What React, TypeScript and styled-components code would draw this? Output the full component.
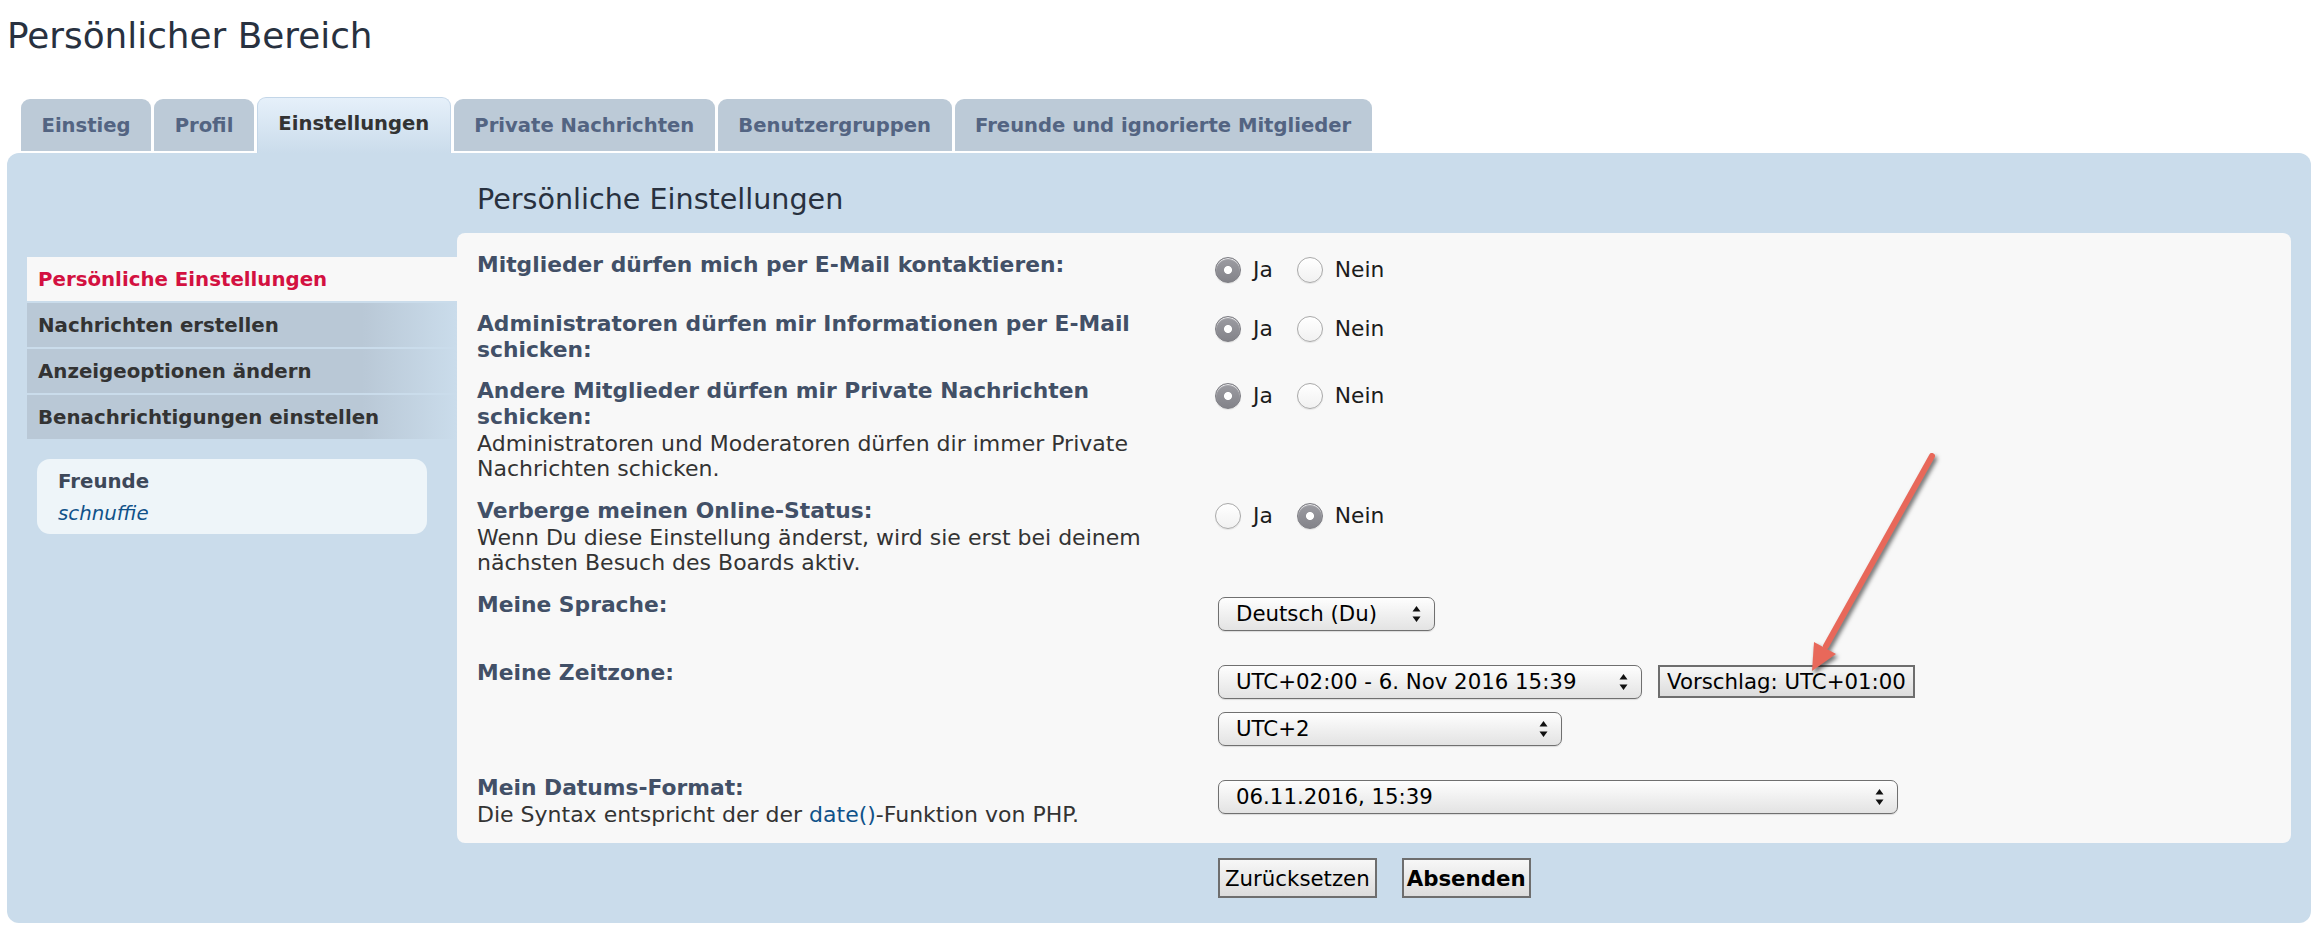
import React from "react";
import styled, { createGlobalStyle, css } from "styled-components";

const GlobalStyle = createGlobalStyle`
  html, body {
    margin: 0;
    padding: 0;
    background: #ffffff;
  }
  body {
    font-family: "DejaVu Sans", Verdana, sans-serif;
    color: #333333;
  }
  *, *::before, *::after {
    box-sizing: border-box;
  }
`;

const Page = styled.div`
  position: relative;
  width: 2324px;
  padding: 0 13px 0 7px;
`;

const PageTitle = styled.h2`
  margin: 15px 0 0;
  font-size: 35.8px;
  font-weight: normal;
  line-height: 41px;
  color: #28313f;
`;

/* ---------- tabs ---------- */

const TabBar = styled.ul`
  display: flex;
  align-items: flex-end;
  gap: 3px;
  list-style: none;
  margin: 41px 0 0 14px;
  padding: 0;
`;

const Tab = styled.li<{ $active?: boolean }>`
  display: flex;
  align-items: center;
  padding: 0 20.5px;
  border-radius: 9px 9px 0 0;
  font-size: 19.6px;
  font-weight: bold;
  white-space: nowrap;
  ${({ $active }) =>
    $active
      ? css`
          height: 56px;
          padding-bottom: 4px;
          color: #333333;
          background: linear-gradient(#e6f0fa, #cadceb);
          border: 1px solid #c3d6e8;
          border-bottom: none;
        `
      : css`
          height: 52px;
          margin-bottom: 2px;
          color: #536482;
          background: #bccad7;
        `}
`;

/* ---------- panel ---------- */

const Panel = styled.div`
  display: flex;
  background: #cadceb;
  border-radius: 12px;
  padding: 29px 20px 25px 20px;
`;

const Sidebar = styled.div`
  width: 430px;
  flex-shrink: 0;
  margin-top: 75px;
`;

const MenuList = styled.ul`
  display: flex;
  flex-direction: column;
  gap: 2px;
  list-style: none;
  margin: 0;
  padding: 0;
`;

const MenuItem = styled.li<{ $active?: boolean }>`
  display: flex;
  align-items: center;
  height: 44px;
  padding-left: 11px;
  font-size: 19.8px;
  font-weight: bold;
  white-space: nowrap;
  ${({ $active }) =>
    $active
      ? css`
          color: #d31141;
          background: #f8f8f8;
        `
      : css`
          color: #333333;
          background: linear-gradient(to right, #b9c8d6 78%, #cadceb 100%);
        `}
`;

const FriendsBox = styled.div`
  width: 390px;
  margin: 20px 0 0 10px;
  padding: 7px 21px 4px;
  border-radius: 13px;
  background: #eef5f9;
  font-size: 19.8px;
  line-height: 32px;
`;

const FriendsTitle = styled.div`
  font-weight: bold;
  color: #3d4859;
`;

const FriendLink = styled.a`
  display: block;
  font-style: italic;
  color: #105289;
  text-decoration: none;
`;

const Main = styled.div`
  flex: 1;
  display: flex;
  flex-direction: column;
`;

const SectionTitle = styled.h3`
  margin: 0 0 0 20px;
  font-size: 28.6px;
  font-weight: normal;
  line-height: 34px;
  color: #28313f;
`;

const ContentBox = styled.div`
  margin-top: 17px;
  padding: 19px 20px 0 20px;
  background: #f8f8f8;
  border-radius: 8px;
`;

/* ---------- form rows ---------- */

const Row = styled.div`
  display: grid;
  grid-template-columns: 738px 1fr;
  padding-bottom: 16px;
`;

const Term = styled.div`
  max-width: 700px;
  font-size: 21.8px;
  line-height: 25.5px;
`;

const Label = styled.label`
  display: block;
  font-weight: bold;
  color: #425067;
`;

const Explain = styled.span`
  display: block;
  margin-top: 1.5px;
  font-size: 22px;
  color: #333333;
`;

const InlineLink = styled.a`
  color: #105289;
  text-decoration: none;
`;

const Field = styled.div`
  display: flex;
  flex-direction: column;
  align-items: flex-start;
`;

const RadioGroup = styled.div`
  display: flex;
  align-items: center;
  height: 26px;
  margin: 5px 0 12px;
`;

const RadioOption = styled.label`
  display: inline-flex;
  align-items: center;
  gap: 12px;
  margin-right: 24px;
  font-size: 21.8px;
  line-height: 25.5px;
  color: #1c1c1c;
`;

const Radio = styled.input.attrs({ type: "radio", readOnly: true })`
  appearance: none;
  -webkit-appearance: none;
  width: 26px;
  height: 26px;
  margin: 0;
  border-radius: 50%;
  border: 1px solid #a9a9a9;
  background: linear-gradient(#ffffff, #f1f1f1);
  box-shadow: inset 0 1px 1px rgba(255, 255, 255, 0.9), 0 1px 1px rgba(0, 0, 0, 0.08);

  &:checked {
    border-color: #7c7c82;
    background: radial-gradient(circle, #ffffff 0 3.6px, rgba(255, 255, 255, 0) 4.4px),
      linear-gradient(#9c9ca2, #838389);
  }
`;

const SelectLine = styled.div`
  display: flex;
  align-items: center;
  gap: 16px;
  margin: 5px 0 13px;

  & + & {
    margin-top: 0;
  }
`;

const SelectBox = styled.div<{ $width: number }>`
  display: flex;
  align-items: center;
  justify-content: space-between;
  width: ${({ $width }) => $width}px;
  height: 34px;
  margin-left: 3px;
  padding: 0 13px 0 17px;
  border: 1px solid #707070;
  border-radius: 7px;
  background: linear-gradient(#fefefe, #efefef 55%, #e3e3e3);
  box-shadow: 0 1px 1px rgba(0, 0, 0, 0.12);
  font-size: 21.3px;
  color: #000000;
  white-space: nowrap;
`;

const PushButton = styled.button<{ $primary?: boolean }>`
  height: 40px;
  padding: ${({ $primary }) => ($primary ? "0 3px" : "0 5px")};
  border: 2px solid #6e6e6e;
  border-radius: 0;
  background: linear-gradient(#f7f7f7, #dcdcdc);
  font-family: "DejaVu Sans", Verdana, sans-serif;
  font-size: 21.3px;
  font-weight: ${({ $primary }) => ($primary ? "bold" : "normal")};
  color: #000000;
  white-space: nowrap;
`;

const SuggestButton = styled(PushButton)`
  height: 33px;
  padding: 0 7px;
`;

const ButtonRow = styled.div`
  display: flex;
  gap: 25px;
  margin-top: 15px;
  padding-left: 761px;
`;

const Annotation = styled.svg`
  position: absolute;
  left: 1790px;
  top: 425px;
  overflow: visible;
  filter: drop-shadow(2px 3px 2px rgba(0, 0, 0, 0.55));
  pointer-events: none;
`;

const UpDown = () => (
  <svg width="9" height="18" viewBox="0 0 9 18">
    <path d="M4.5 1 L8.5 6.5 H0.5 Z M4.5 17 L8.5 11.5 H0.5 Z" fill="#111111" />
  </svg>
);

const Select = ({ value, width }: { value: string; width: number }) => (
  <SelectBox $width={width}>
    <span>{value}</span>
    <UpDown />
  </SelectBox>
);

const YesNo = ({ name, yes }: { name: string; yes: boolean }) => (
  <RadioGroup>
    <RadioOption>
      <Radio name={name} checked={yes} />
      Ja
    </RadioOption>
    <RadioOption>
      <Radio name={name} checked={!yes} />
      Nein
    </RadioOption>
  </RadioGroup>
);

const tabs = [
  "Einstieg",
  "Profil",
  "Einstellungen",
  "Private Nachrichten",
  "Benutzergruppen",
  "Freunde und ignorierte Mitglieder",
];

const menu = [
  "Persönliche Einstellungen",
  "Nachrichten erstellen",
  "Anzeigeoptionen ändern",
  "Benachrichtigungen einstellen",
];

export default function App() {
  return (
    <Page>
      <GlobalStyle />
      <PageTitle>Persönlicher Bereich</PageTitle>

      <TabBar>
        {tabs.map((t) => (
          <Tab key={t} $active={t === "Einstellungen"}>
            {t}
          </Tab>
        ))}
      </TabBar>

      <Panel>
        <Sidebar>
          <MenuList>
            {menu.map((m, i) => (
              <MenuItem key={m} $active={i === 0}>
                {m}
              </MenuItem>
            ))}
          </MenuList>
          <FriendsBox>
            <FriendsTitle>Freunde</FriendsTitle>
            <FriendLink href="#">schnuffie</FriendLink>
          </FriendsBox>
        </Sidebar>

        <Main>
          <SectionTitle>Persönliche Einstellungen</SectionTitle>
          <ContentBox>
            <Row>
              <Term>
                <Label>Mitglieder dürfen mich per E-Mail kontaktieren:</Label>
              </Term>
              <Field>
                <YesNo name="viewemail" yes />
              </Field>
            </Row>

            <Row>
              <Term>
                <Label>Administratoren dürfen mir Informationen per E-Mail schicken:</Label>
              </Term>
              <Field>
                <YesNo name="massemail" yes />
              </Field>
            </Row>

            <Row>
              <Term>
                <Label>Andere Mitglieder dürfen mir Private Nachrichten schicken:</Label>
                <Explain>
                  Administratoren und Moderatoren dürfen dir immer Private Nachrichten schicken.
                </Explain>
              </Term>
              <Field>
                <YesNo name="allowpm" yes />
              </Field>
            </Row>

            <Row>
              <Term>
                <Label>Verberge meinen Online-Status:</Label>
                <Explain>
                  Wenn Du diese Einstellung änderst, wird sie erst bei deinem nächsten Besuch des
                  Boards aktiv.
                </Explain>
              </Term>
              <Field>
                <YesNo name="hideonline" yes={false} />
              </Field>
            </Row>

            <Row>
              <Term>
                <Label>Meine Sprache:</Label>
              </Term>
              <Field>
                <SelectLine>
                  <Select value="Deutsch (Du)" width={217} />
                </SelectLine>
              </Field>
            </Row>

            <Row>
              <Term>
                <Label>Meine Zeitzone:</Label>
              </Term>
              <Field>
                <SelectLine>
                  <Select value="UTC+02:00 - 6. Nov 2016 15:39" width={424} />
                  <SuggestButton type="button">Vorschlag: UTC+01:00</SuggestButton>
                </SelectLine>
                <SelectLine>
                  <Select value="UTC+2" width={344} />
                </SelectLine>
              </Field>
            </Row>

            <Row>
              <Term>
                <Label>Mein Datums-Format:</Label>
                <Explain>
                  Die Syntax entspricht der der <InlineLink href="#">date()</InlineLink>-Funktion
                  von PHP.
                </Explain>
              </Term>
              <Field>
                <SelectLine>
                  <Select value="06.11.2016, 15:39" width={680} />
                </SelectLine>
              </Field>
            </Row>
          </ContentBox>

          <ButtonRow>
            <PushButton type="reset">Zurücksetzen</PushButton>
            <PushButton type="submit" $primary>
              Absenden
            </PushButton>
          </ButtonRow>
        </Main>
      </Panel>

      <Annotation width="170" height="250" viewBox="0 0 170 250">
        <line
          x1="142"
          y1="16"
          x2="36"
          y2="206"
          stroke="#e8685a"
          strokeWidth="6"
          strokeLinecap="round"
        />
        <path d="M22 231 L46 214 L24 202 Z" fill="#e8685a" />
      </Annotation>
    </Page>
  );
}
